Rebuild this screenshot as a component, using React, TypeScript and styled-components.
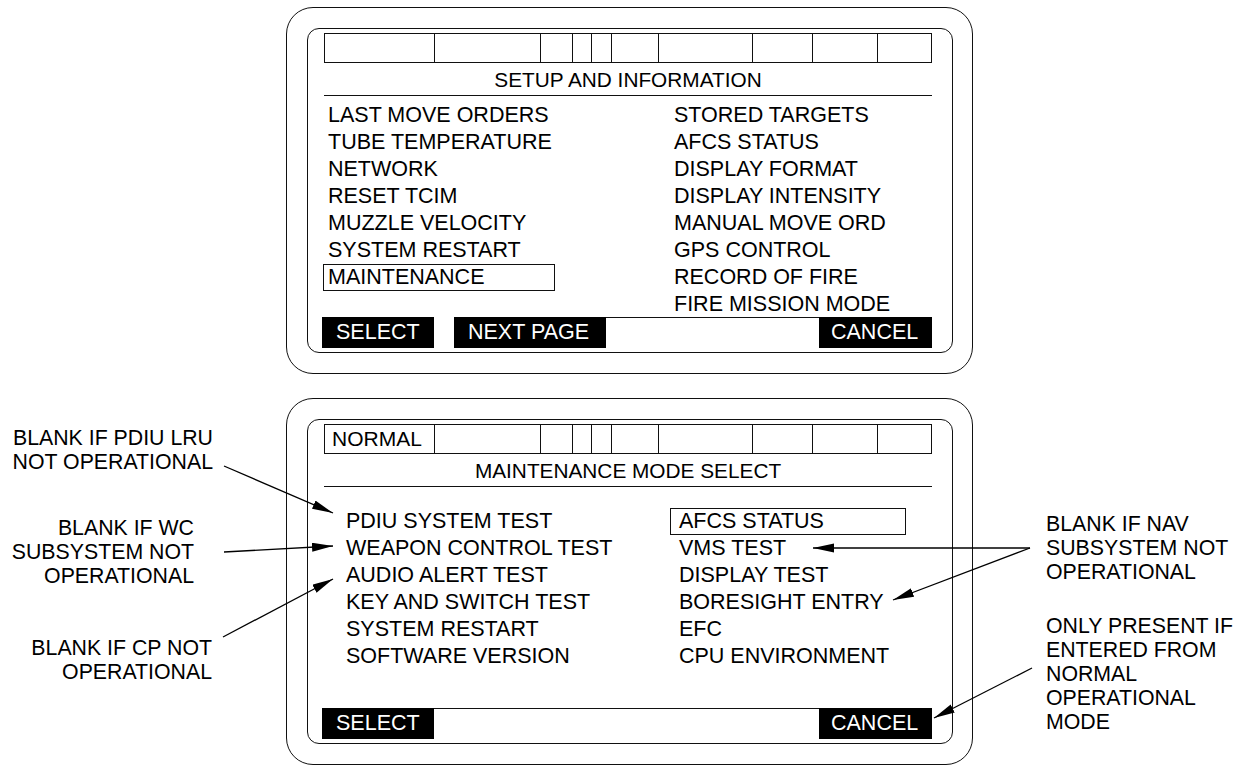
import styled, { createGlobalStyle } from 'styled-components';

const GlobalStyle = createGlobalStyle`
  body {
    margin: 0;
    background: #fff;
    color: #000;
    font-family: "Liberation Sans", Arial, sans-serif;
  }
`;

const STATUS_CELLS = [109, 106, 32, 19, 20, 47, 94, 60, 65];

const SETUP_LEFT = [
  'LAST MOVE ORDERS',
  'TUBE TEMPERATURE',
  'NETWORK',
  'RESET TCIM',
  'MUZZLE VELOCITY',
  'SYSTEM RESTART',
  'MAINTENANCE',
];

const SETUP_RIGHT = [
  'STORED TARGETS',
  'AFCS STATUS',
  'DISPLAY FORMAT',
  'DISPLAY INTENSITY',
  'MANUAL MOVE ORD',
  'GPS CONTROL',
  'RECORD OF FIRE',
  'FIRE MISSION MODE',
];

const MAINT_LEFT = [
  'PDIU SYSTEM TEST',
  'WEAPON CONTROL TEST',
  'AUDIO ALERT TEST',
  'KEY AND SWITCH TEST',
  'SYSTEM RESTART',
  'SOFTWARE VERSION',
];

const MAINT_RIGHT = [
  'AFCS STATUS',
  'VMS TEST',
  'DISPLAY TEST',
  'BORESIGHT ENTRY',
  'EFC',
  'CPU ENVIRONMENT',
];

// callout arrows: [fromX, fromY, toX, toY]
const ARROWS = [
  [224, 466, 333, 513],
  [224, 552, 333, 546],
  [223, 637, 333, 579],
  [1030, 548, 813, 548],
  [1030, 548, 893, 600],
  [1032, 668, 934, 718],
];

function Display({
  mode,
  title,
  left,
  right,
  boxedLeft,
  boxedRight,
  listTop,
  indent,
  itemPad,
  leftCol,
  boxWidth,
  nextPage,
}: {
  mode?: string;
  title: string;
  left: string[];
  right: string[];
  boxedLeft?: number;
  boxedRight?: number;
  listTop: number;
  indent: number;
  itemPad: number;
  leftCol: number;
  boxWidth: number;
  nextPage?: boolean;
}) {
  return (
    <Bezel>
      <Screen>
        <StatusBar>
          {STATUS_CELLS.map((w, i) => (
            <StatusCell key={i} $width={w}>
              {i === 0 ? mode : null}
            </StatusCell>
          ))}
          <StatusCell />
        </StatusBar>
        <Title>{title}</Title>
        <MenuList $top={listTop} $indent={indent} $leftCol={leftCol}>
          <MenuColumn>
            {left.map((item, i) => (
              <MenuItem key={item} $pad={itemPad} $boxed={i === boxedLeft} $boxWidth={boxWidth}>
                {item}
              </MenuItem>
            ))}
          </MenuColumn>
          <MenuColumn>
            {right.map((item, i) => (
              <MenuItem key={item} $pad={itemPad} $boxed={i === boxedRight} $boxWidth={boxWidth}>
                {item}
              </MenuItem>
            ))}
          </MenuColumn>
        </MenuList>
        <SoftKeys>
          <SoftKey $width={112}>SELECT</SoftKey>
          {nextPage && (
            <>
              <KeyGap />
              <SoftKey $width={152}>NEXT PAGE</SoftKey>
            </>
          )}
          <KeyRule />
          <SoftKey $width={113} $pad={12}>CANCEL</SoftKey>
        </SoftKeys>
      </Screen>
    </Bezel>
  );
}

export default function App() {
  return (
    <>
      <GlobalStyle />
      <Page>
        <PanelSlot $row={1}>
          <Display
            title="SETUP AND INFORMATION"
            left={SETUP_LEFT}
            right={SETUP_RIGHT}
            boxedLeft={6}
            listTop={5.5}
            indent={0}
            itemPad={4}
            leftCol={346}
            boxWidth={232}
            nextPage
          />
        </PanelSlot>

        <LeftNotes>
          <Note $gap={28}>
            BLANK IF PDIU LRU<br />NOT OPERATIONAL
          </Note>
          <Note $gap={42} $inset={19}>
            BLANK IF WC<br />SUBSYSTEM NOT<br />OPERATIONAL
          </Note>
          <Note $gap={48} $inset={1}>
            BLANK IF CP NOT<br />OPERATIONAL
          </Note>
        </LeftNotes>

        <PanelSlot $row={2}>
          <Display
            mode="NORMAL"
            title="MAINTENANCE MODE SELECT"
            left={MAINT_LEFT}
            right={MAINT_RIGHT}
            boxedRight={0}
            listTop={20.5}
            indent={14}
            itemPad={8}
            leftCol={333}
            boxWidth={236}
          />
        </PanelSlot>

        <RightNotes>
          <Note $gap={114}>
            BLANK IF NAV<br />SUBSYSTEM NOT<br />OPERATIONAL
          </Note>
          <Note $gap={30}>
            ONLY PRESENT IF<br />ENTERED FROM<br />NORMAL<br />OPERATIONAL<br />MODE
          </Note>
        </RightNotes>

        <Callouts width="1246" height="765" viewBox="0 0 1246 765">
          <defs>
            <marker
              id="head"
              markerUnits="userSpaceOnUse"
              markerWidth="22"
              markerHeight="10"
              refX="21"
              refY="4.5"
              orient="auto"
            >
              <path d="M0,0 L21,4.5 L0,9 Z" fill="#000" />
            </marker>
          </defs>
          {ARROWS.map(([x1, y1, x2, y2], i) => (
            <line key={i} x1={x1} y1={y1} x2={x2} y2={y2} stroke="#000" strokeWidth="1.3" markerEnd="url(#head)" />
          ))}
        </Callouts>
      </Page>
    </>
  );
}

const Page = styled.div`
  position: relative;
  width: 1246px;
  height: 765px;
  box-sizing: border-box;
  padding-top: 7px;
  display: grid;
  grid-template-columns: 286px 687px 1fr;
  grid-template-rows: auto auto;
  align-content: start;
  row-gap: 24px;
  align-items: start;
  overflow: hidden;
`;

const PanelSlot = styled.div<{ $row: number }>`
  grid-column: 2;
  grid-row: ${(p) => p.$row};
`;

const Bezel = styled.div`
  box-sizing: border-box;
  width: 687px;
  height: 367px;
  border: 1.5px solid #111;
  border-radius: 27px;
  padding: 20px 19.5px 20.5px 19.5px;
`;

const Screen = styled.div`
  box-sizing: border-box;
  height: 100%;
  border: 1.5px solid #111;
  border-radius: 12px;
  padding: 4px 19.5px 4px 16.5px;
  display: flex;
  flex-direction: column;
`;

const StatusBar = styled.div`
  display: flex;
  height: 30px;
  box-sizing: border-box;
  border: 1.5px solid #111;
  flex-shrink: 0;
`;

const StatusCell = styled.div<{ $width?: number }>`
  box-sizing: border-box;
  flex: ${(p) => (p.$width ? `0 0 ${p.$width}px` : '1')};
  border-left: 1.5px solid #111;
  font-size: 21px;
  line-height: 27px;
  padding-left: 7px;
  white-space: nowrap;

  &:first-child {
    border-left: none;
  }
`;

const Title = styled.div`
  flex-shrink: 0;
  height: 33px;
  box-sizing: border-box;
  border-bottom: 1.5px solid #111;
  display: flex;
  align-items: center;
  justify-content: center;
  padding-top: 1px;
  font-size: 20.8px;
`;

const MenuList = styled.div<{ $top: number; $indent: number; $leftCol: number }>`
  flex: 1;
  min-height: 0;
  display: grid;
  grid-template-columns: ${(p) => p.$leftCol}px 1fr;
  align-content: start;
  padding-top: ${(p) => p.$top}px;
  padding-left: ${(p) => p.$indent}px;
  margin-left: -1px;
`;

const MenuColumn = styled.div`
  display: flex;
  flex-direction: column;
`;

const MenuItem = styled.div<{ $pad: number; $boxed: boolean; $boxWidth: number }>`
  box-sizing: border-box;
  height: 27px;
  flex-shrink: 0;
  width: ${(p) => (p.$boxed ? `${p.$boxWidth}px` : 'auto')};
  border: 1px solid ${(p) => (p.$boxed ? '#111' : 'transparent')};
  padding-left: ${(p) => p.$pad}px;
  font-size: 21.5px;
  line-height: 25px;
  white-space: nowrap;
`;

const SoftKeys = styled.div`
  flex-shrink: 0;
  display: flex;
  height: 31px;
  margin-left: -2px;
`;

const SoftKey = styled.div<{ $width: number; $pad?: number }>`
  box-sizing: border-box;
  width: ${(p) => p.$width}px;
  background: #000;
  color: #fff;
  font-size: 21.5px;
  line-height: 31px;
  padding-left: ${(p) => p.$pad ?? 14}px;
  white-space: nowrap;
`;

const KeyGap = styled.div`
  width: 20px;
`;

const KeyRule = styled.div`
  flex: 1;
  border-top: 1.5px solid #111;
`;

const LeftNotes = styled.div`
  grid-column: 1;
  grid-row: 2;
  display: flex;
  flex-direction: column;
  align-items: flex-end;
  padding-right: 73px;
  text-align: right;
`;

const RightNotes = styled.div`
  grid-column: 3;
  grid-row: 2;
  display: flex;
  flex-direction: column;
  align-items: flex-start;
  padding-left: 73px;
`;

const Note = styled.div<{ $gap: number; $inset?: number }>`
  margin-top: ${(p) => p.$gap}px;
  margin-right: ${(p) => p.$inset ?? 0}px;
  font-size: 21.3px;
  line-height: 24px;
  white-space: nowrap;
`;

const Callouts = styled.svg`
  position: absolute;
  left: 0;
  top: 0;
  pointer-events: none;
`;
